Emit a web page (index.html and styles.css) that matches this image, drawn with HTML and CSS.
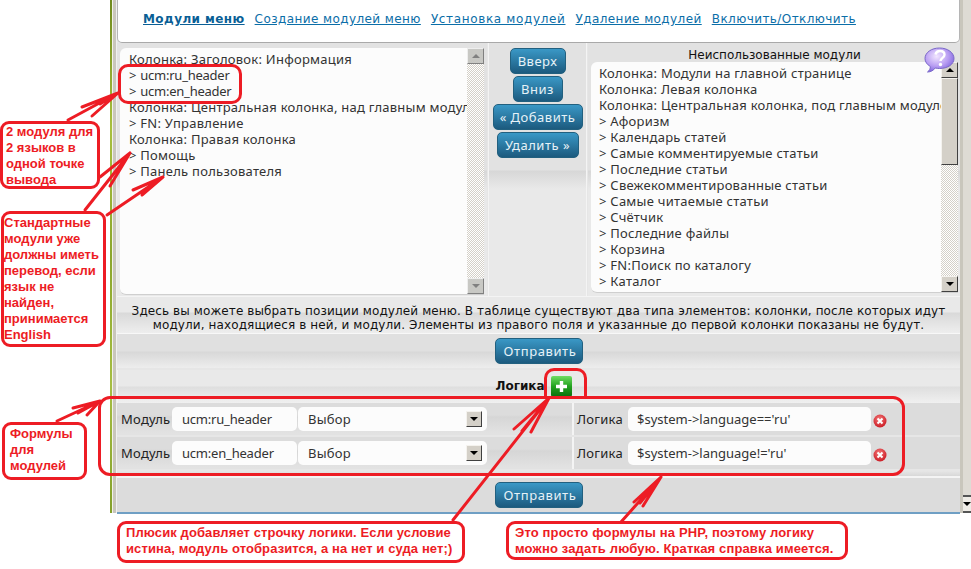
FILE: index.html
```html
<!DOCTYPE html>
<html lang="ru">
<head>
<meta charset="utf-8">
<title>Модули меню</title>
<link rel="stylesheet" href="styles.css">
</head>
<body>
<div class="page">
  <div class="shell">
    <div class="stripe"></div>
    <div class="rail"></div>
    <main class="main">
      <nav class="nav">
        <a class="nav-link nav-active">Модули меню</a>
        <a class="nav-link">Создание модулей меню</a>
        <a class="nav-link nav-wide">Установка модулей</a>
        <a class="nav-link">Удаление модулей</a>
        <a class="nav-link">Включить/Отключить</a>
      </nav>
      <section class="columns">
        <div class="cell cell-left">
          <div class="listbox listbox-left">
            <div class="list-items">
              <div>Колонка: Заголовок: Информация</div>
              <div>&gt; <span class="latin">ucm:ru_header</span></div>
              <div>&gt; <span class="latin">ucm:en_header</span></div>
              <div>Колонка: Центральная колонка, над главным модулем</div>
              <div>&gt; FN: Управление</div>
              <div>Колонка: Правая колонка</div>
              <div>&gt; Помощь</div>
              <div>&gt; Панель пользователя</div>
            </div>
            <div class="scrollbar">
              <div class="sb-btn sb-disabled"><span class="tri-up tri-grey"></span></div>
              <div class="sb-track"></div>
              <div class="sb-btn sb-disabled"><span class="tri-down tri-grey"></span></div>
            </div>
          </div>
        </div>
        <div class="cell cell-mid">
          <button class="btn btn-up">Вверх</button>
          <button class="btn btn-down">Вниз</button>
          <button class="btn btn-add">« Добавить</button>
          <button class="btn btn-del">Удалить »</button>
        </div>
        <div class="cell cell-right">
          <div class="list-title">Неиспользованные модули</div>
          <div class="listbox listbox-right">
            <div class="list-items">
              <div>Колонка: Модули на главной странице</div>
              <div>Колонка: Левая колонка</div>
              <div>Колонка: Центральная колонка, под главным модулем</div>
              <div>&gt; Афоризм</div>
              <div>&gt; Календарь статей</div>
              <div>&gt; Самые комментируемые статьи</div>
              <div>&gt; Последние статьи</div>
              <div>&gt; Свежекомментированные статьи</div>
              <div>&gt; Самые читаемые статьи</div>
              <div>&gt; Счётчик</div>
              <div>&gt; Последние файлы</div>
              <div>&gt; Корзина</div>
              <div>&gt; FN:Поиск по каталогу</div>
              <div>&gt; Каталог</div>
            </div>
            <div class="scrollbar">
              <div class="sb-btn"><span class="tri-up"></span></div>
              <div class="sb-thumb"></div>
              <div class="sb-track"></div>
              <div class="sb-btn"><span class="tri-down"></span></div>
            </div>
          </div>
          <svg class="help" viewBox="0 0 31 26" width="31" height="26" aria-hidden="true">
            <defs>
              <radialGradient id="hg" cx="0.4" cy="0.35" r="0.75">
                <stop offset="0" stop-color="#f2e6ff"/>
                <stop offset="0.55" stop-color="#b79cf2"/>
                <stop offset="1" stop-color="#6f55d8"/>
              </radialGradient>
            </defs>
            <path d="M15.500 1C23.500 1 30 5.500 30 11.500C30 17.500 23.500 21.500 15.500 21.500C14 21.500 12.500 21.300 11.200 21C9.500 23.500 6.500 25 3.500 25C5.500 23.500 6.500 21.500 6.300 19.500C3 17.500 1 14.800 1 11.500C1 5.500 7.500 1 15.500 1Z" fill="url(#hg)" stroke="#7a68c8" stroke-width="1"/>
            <path d="M11.500 7.500C12 5 14 4 16 4C18.800 4 20.500 5.700 20.500 7.800C20.500 10.800 16.500 11 16.500 14" fill="none" stroke="#fff" stroke-width="2.400"/>
            <circle cx="16.500" cy="17.500" r="1.700" fill="#fff"/>
          </svg>
        </div>
      </section>
      <section class="hint">
        <p>Здесь вы можете выбрать позиции модулей меню. В таблице существуют два типа элементов: колонки, после которых идут<br>модули, находящиеся в ней, и модули. Элементы из правого поля и указанные до первой колонки показаны не будут.</p>
      </section>
      <section class="submit-row"><button class="btn btn-send">Отправить</button></section>
      <section class="logic-head">
        <b>Логика</b>
        <svg class="plus" viewBox="0 0 21 21" width="21" height="21" aria-hidden="true">
          <defs>
            <linearGradient id="pg" x1="0" y1="0" x2="0" y2="1">
              <stop offset="0" stop-color="#6fdc62"/>
              <stop offset="0.5" stop-color="#22a11e"/>
              <stop offset="1" stop-color="#0a6e0c"/>
            </linearGradient>
          </defs>
          <rect width="21" height="21" rx="2" fill="url(#pg)"/>
          <path d="M10.500 5V16M5 10.500H16" stroke="#fff" stroke-width="3.400"/>
        </svg>
      </section>
      <section class="logic-row">
        <div class="logic-left">
          <span class="lbl lbl-mod">Модуль</span>
          <div class="field field-name">ucm:ru_header</div>
          <div class="field field-select">Выбор<span class="select-btn"><span class="tri-down"></span></span></div>
        </div>
        <div class="logic-right">
          <span class="lbl lbl-log">Логика</span>
          <div class="field field-expr">$system-&gt;language=='ru'</div>
          <svg class="del" viewBox="0 0 14 14" width="14" height="14" aria-hidden="true"><use href="#delicon"/></svg>
        </div>
      </section>
      <section class="logic-row">
        <div class="logic-left">
          <span class="lbl lbl-mod">Модуль</span>
          <div class="field field-name">ucm:en_header</div>
          <div class="field field-select">Выбор<span class="select-btn"><span class="tri-down"></span></span></div>
        </div>
        <div class="logic-right">
          <span class="lbl lbl-log">Логика</span>
          <div class="field field-expr">$system-&gt;language!='ru'</div>
          <svg class="del" viewBox="0 0 14 14" width="14" height="14" aria-hidden="true"><use href="#delicon"/></svg>
        </div>
      </section>
      <div class="logic-end"></div>
      <section class="submit-row submit-last"><button class="btn btn-send">Отправить</button></section>
    </main>
    <div class="pagebar">
      <div class="pagebar-thumb"></div>
      <div class="pagebar-btn"><span class="tri-down"></span></div>
    </div>
  </div>

  <svg class="defs" width="0" height="0" aria-hidden="true">
    <defs>
      <radialGradient id="dg" cx="0.45" cy="0.35" r="0.7">
        <stop offset="0" stop-color="#f47a7a"/>
        <stop offset="1" stop-color="#c8141e"/>
      </radialGradient>
      <g id="delicon">
        <circle cx="7" cy="7" r="6.500" fill="url(#dg)"/>
        <path d="M4.500 4.500L9.500 9.500M9.500 4.500L4.500 9.500" stroke="#fff" stroke-width="2"/>
      </g>
    </defs>
  </svg>

  <svg class="arrows" viewBox="0 0 971 569" width="971" height="569" aria-hidden="true">
    <g fill="none" stroke="#ed1c24" stroke-width="3" stroke-linecap="round" stroke-linejoin="round">
      <path d="M68 120L118 93M82 107L118 93M92 116L118 93M100 104L118 93"/>
      <path d="M85 210L130 153M100 177L130 153M110 186L130 153"/>
      <path d="M107 215L163 177M133 190L163 177M142 195L163 177"/>
      <path d="M57 421L100 401M73 408L100 401M87 415L100 401M78 413L100 401"/>
      <path d="M453 520L549 398M514 429L549 398M531 432L549 398M522 431L549 398"/>
      <path d="M621 522L661 477M634 502L661 477M643 506L661 477M640 503L661 477"/>
    </g>
  </svg>

  <div class="note note-lang">2 модуля для<br>2 языков в<br>одной точке<br>вывода</div>
  <div class="note note-std">Стандартные<br>модули уже<br>должны иметь<br>перевод, если<br>язык не<br>найден,<br>принимается<br>English</div>
  <div class="note note-formula">Формулы<br>для<br>модулей</div>
  <div class="note note-plus">Плюсик добавляет строчку логики. Если условие<br>истина, модуль отобразится, а на нет и суда нет;)</div>
  <div class="note note-php">Это просто формулы на PHP, поэтому логику<br>можно задать любую. Краткая справка имеется.</div>
  <div class="ring ring-ucm"></div>
  <div class="ring ring-plus"></div>
  <div class="ring ring-rows"></div>
</div>
</body>
</html>
```
FILE: styles.css
```css
* { box-sizing: border-box; }
html, body { margin: 0; padding: 0; background: #fff; }
body { font-family: "DejaVu Sans", sans-serif; font-size: 12px; color: #333; }
.page { position: relative; width: 971px; height: 569px; overflow: hidden; }

.shell { display: flex; height: 514px; margin-left: 110px; }
.stripe { width: 3px; height: 513px; border-right: 1px solid #f2f2ea; background: linear-gradient(#6f8a1e, #a8c03e 25%, #8ba62c 50%, #a6be42 75%, #83a02a); }
.rail { width: 4px; height: 513px; background: #c9c6bc; border-right: 1px solid #f0f0f0; }

.main { width: 843px; flex: none; height: 514px; display: flex; flex-direction: column; border-bottom: 2px solid #6f9fc4; background: #e6e6e6; }

.nav { height: 43px; flex: none; display: flex; gap: 10px; padding: 11px 0 0 25px; background: #fff; border-bottom: 1px solid #a9a9a9; border-left: 1px solid #b5b5b5; border-right: 1px solid #b5b5b5; border-bottom-left-radius: 5px; border-bottom-right-radius: 5px; line-height: 16px; letter-spacing: 0.42px; }
.nav-link { color: #0b6ea8; text-decoration: underline; white-space: nowrap; }
.nav-active { font-weight: bold; color: #0a5f96; }
.nav-wide { letter-spacing: 0.65px; }

.columns { height: 253px; flex: none; display: flex; gap: 1px; }
.cell { position: relative; background: linear-gradient(#e2e2e2 0, #e2e2e2 127px, #d7d7d7 128px, #e9e9e9 146px, #e9e9e9 100%); }
.cell-left { width: 370px; flex: none; padding: 5px 3px 0 3px; }
.cell-mid { width: 99px; flex: none; display: flex; flex-direction: column; align-items: center; gap: 2px; padding-top: 5px; border-left: 1px solid #f4f4f4; border-right: 1px solid #f4f4f4; }
.cell-right { flex: 1; min-width: 0; padding: 5px 2px 0 3px; }
.list-title { height: 14px; line-height: 14px; text-align: center; color: #111; }

.listbox { display: flex; background: #fcfcfc; border-radius: 6px 0 0 6px; overflow: hidden; border-bottom: 1px solid #cfcfcf; }
.listbox-left { height: 247px; }
.listbox-right { height: 231px; }
.list-items { flex: 1; min-width: 0; padding: 3px 0 0 9px; overflow: hidden; font: 13px/16px "Noto Sans", sans-serif; letter-spacing: 0.25px; white-space: nowrap; color: #333; }
.listbox-right .list-items { padding-left: 8px; }
.latin { letter-spacing: -0.25px; }

.scrollbar { width: 17px; flex: none; display: flex; flex-direction: column; }
.sb-btn { height: 16px; flex: none; display: flex; align-items: center; justify-content: center; background: #d4d0c8; border: 1px solid; border-color: #f4f2ee #404040 #404040 #f4f2ee; }
.sb-disabled { background: #c8c8c4; border-color: #eee #808080 #808080 #eee; }
.sb-track { flex: 1; background: conic-gradient(#fff 25%, #d4d0c8 0 50%, #fff 0 75%, #d4d0c8 0) 0 0 / 2px 2px; }
.sb-thumb { height: 87px; flex: none; background: #d4d0c8; border: 1px solid; border-color: #f4f2ee #404040 #404040 #f4f2ee; }

.tri-up, .tri-down { width: 0; height: 0; border-left: 4px solid transparent; border-right: 4px solid transparent; }
.tri-up { border-bottom: 4px solid #000; }
.tri-down { border-top: 4px solid #000; }
.tri-grey.tri-up { border-bottom-color: #808080; }
.tri-grey.tri-down { border-top-color: #808080; }

.btn { display: block; height: 26px; padding: 0; font: 13px/24px "Noto Sans", sans-serif; letter-spacing: 0.5px; color: #e6f2f8; background: linear-gradient(#3a98c6, #1c5a7e); border: 1px solid #22607f; border-radius: 5px; white-space: nowrap; }
.btn-up { width: 56px; }
.btn-down { width: 50px; }
.btn-add { width: 90px; }
.btn-del { width: 82px; }
.btn-send { width: 88px; padding-left: 3px; letter-spacing: 0.6px; }

.hint { height: 38px; flex: none; padding-top: 7px; background: linear-gradient(#e9e9e9 0, #e9e9e9 15px, #d9d9d9 16px, #efefef 37px); border-top: 1px solid #f4f4f4; border-bottom: 1px solid #f8f8f8; }
.hint p { margin: 0; text-align: center; line-height: 14px; color: #111; letter-spacing: 0.11px; }

.submit-row { height: 34px; flex: none; display: flex; align-items: center; justify-content: center; background: linear-gradient(#e0e0e0 0, #e0e0e0 17px, #d8d8d8 18px, #ededed 34px); }

.logic-head { height: 33px; flex: none; margin-top: 2px; display: flex; align-items: flex-start; justify-content: center; gap: 6px; padding: 8px 11px 0 0; line-height: 16px; color: #111; background: linear-gradient(#e9e9e9 0, #e9e9e9 16px, #dedede 17px, #f0f0f0 33px); border-left: 1px solid #f4f4f4; }

.logic-row { height: 32px; flex: none; margin-bottom: 2px; display: flex; gap: 2px; background: #f4f4f4; }
.logic-left, .logic-right { display: flex; align-items: center; background: linear-gradient(#dcdcdc, #dcdcdc 12px, #d6d6d6 14px, #e2e2e2 30px); font: 13px/16px "Noto Sans", sans-serif; letter-spacing: 0.25px; }
.logic-left { width: 455px; flex: none; padding-left: 4px; }
.logic-right { flex: 1; padding-left: 3px; background: #dcdcdc; }
.lbl { color: #222; flex: none; }
.lbl-mod { width: 51px; }
.lbl-log { width: 51px; }
.field { height: 24px; line-height: 24px; background: #fcfcfc; border-radius: 5px; padding-left: 10px; color: #333; white-space: nowrap; position: relative; flex: none; }
.field-name { width: 125px; letter-spacing: -0.2px; }
.field-select { width: 189px; margin-left: 1px; display: flex; justify-content: space-between; }
.select-btn { width: 16px; height: 16px; margin: 4px 5px 0 0; display: flex; align-items: center; justify-content: center; background: #d4d0c8; border: 1px solid; border-color: #f4f2ee #404040 #404040 #f4f2ee; }
.field-expr { width: 243px; padding-left: 9px; letter-spacing: 0; }
.del { margin: 4px 0 0 2px; flex: none; }

.logic-end { height: 7px; flex: none; background: linear-gradient(#e6e6e6, #d8d8d8); border-bottom: 2px solid #f4f4f4; }
.submit-last { height: 34px; background: #dcdcdc; }

.help { position: absolute; top: 4px; right: 5px; }
.plus { flex: none; margin-top: -2px; }

.pagebar { width: 11px; height: 513px; display: flex; flex-direction: column; border-left: 3px solid #c9c6bc; background: #dedbd4; }
.pagebar-thumb { margin-top: auto; height: 2px; border-bottom: 2px solid #555; }
.pagebar-btn { height: 16px; display: flex; align-items: center; justify-content: center; background: #efece6; border-bottom: 2px solid #555; }

.defs { position: absolute; }
.arrows { position: absolute; left: 0; top: 0; pointer-events: none; }

.note { position: absolute; background: #fff; border: 3px solid #ed1c24; border-radius: 9px; color: #ed1c24; font: bold 13px/16px "Liberation Sans", sans-serif; white-space: nowrap; }
.note-lang { left: 0; top: 121px; width: 100px; height: 68px; padding: 0 0 0 3px; }
.note-std { left: 1px; top: 211px; width: 105px; height: 136px; padding: 1px 0 0 0; }
.note-formula { left: 2px; top: 422px; width: 85px; height: 58px; padding: 1px 0 0 5px; }
.note-plus { left: 117px; top: 521px; width: 348px; height: 42px; padding: 1px 0 0 6px; letter-spacing: 0.1px; }
.note-php { left: 506px; top: 521px; width: 342px; height: 39px; padding: 1px 0 0 6px; letter-spacing: 0.15px; }

.ring { position: absolute; border: 3px solid #ed1c24; border-radius: 10px; pointer-events: none; }
.ring-ucm { left: 118px; top: 64px; width: 124px; height: 40px; }
.ring-plus { left: 544px; top: 368px; width: 43px; height: 31px; border-bottom-width: 0; border-radius: 10px 10px 0 0; }
.ring-rows { left: 98px; top: 396px; width: 807px; height: 80px; border-radius: 12px; }
```
